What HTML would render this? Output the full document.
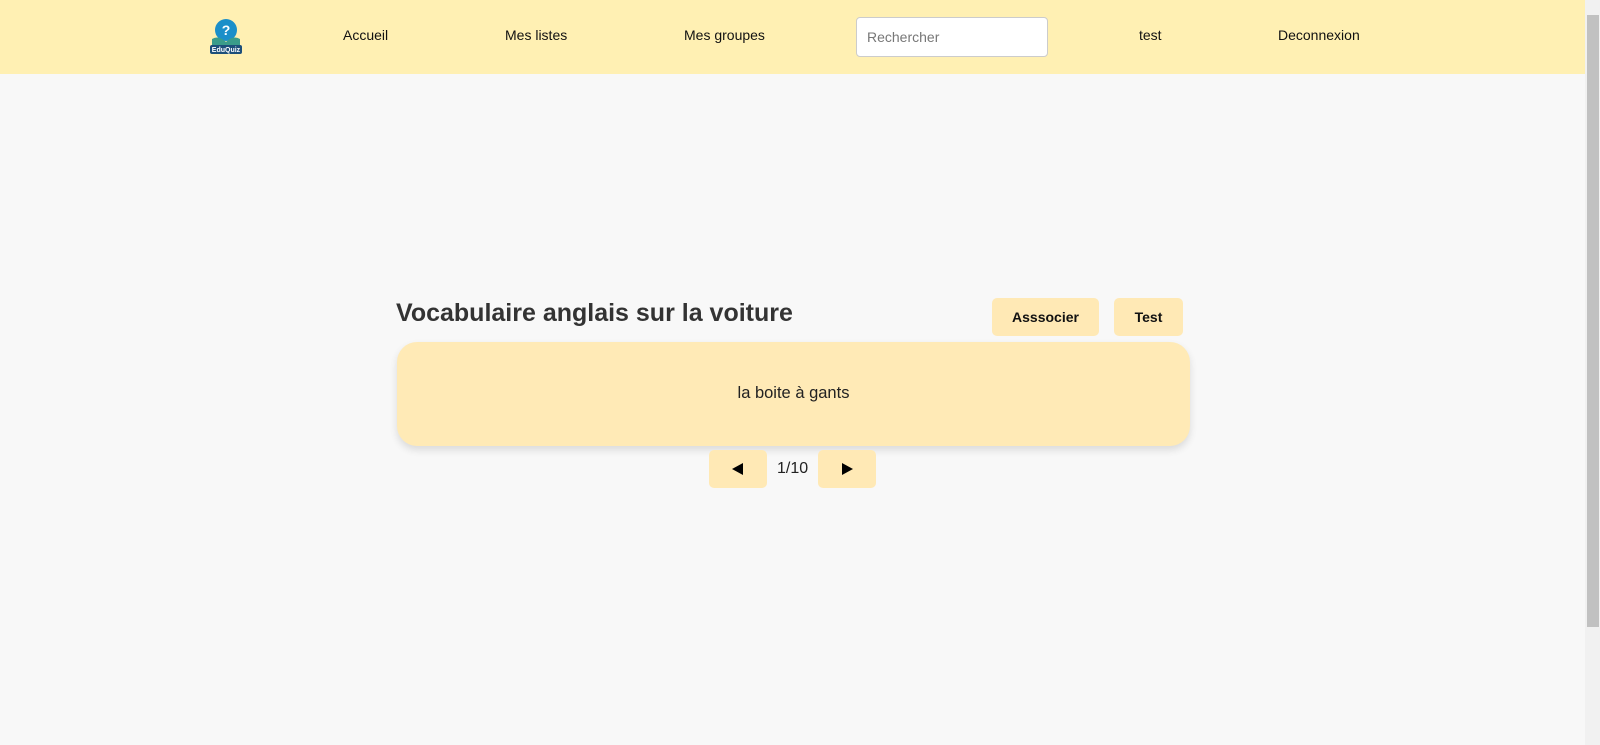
<!DOCTYPE html>
<html><head><meta charset="utf-8"><style>
*{box-sizing:border-box;margin:0;padding:0}
body{width:1600px;height:745px;overflow:hidden;background:#f8f8f8;font-family:"Liberation Sans",Arial,sans-serif;position:relative}
.hdr{position:absolute;left:0;top:0;width:1585px;height:74px;background:#fff0b3}
.nav{position:absolute;top:27px;font-size:14px;color:#111}
.search{position:absolute;left:856px;top:17px;width:192px;height:40px;border:1px solid #ccc;border-radius:4px;background:#fff;font-size:14px;color:#777;padding:11px 10px}
.sb{position:absolute;left:1585px;top:0;width:15px;height:745px;background:#f1f1f1}
.thumb{position:absolute;left:1587px;top:15px;width:12px;height:612px;background:#c1c1c1}
h1{position:absolute;left:396px;top:299px;font-size:25px;font-weight:bold;color:#333}
.btn{position:absolute;background:#ffe9b5;border-radius:5px;font-size:14px;font-weight:bold;color:#111;text-align:center}
.card{position:absolute;left:397px;top:342px;width:793px;height:104px;background:#ffeab6;border-radius:20px;box-shadow:0 4px 8px rgba(0,0,0,.12);text-align:center;font-size:16.5px;color:#222;padding-top:42px}
.btn svg{position:absolute;left:23px;top:13px}
</style></head><body>
<div class="hdr">
<svg style="position:absolute;left:208px;top:17px" width="36" height="38" viewBox="0 0 36 38">
<circle cx="18" cy="13" r="11" fill="#1b8fc9"/><text x="18" y="18" font-size="14" font-weight="bold" fill="#fff" text-anchor="middle" font-family="Liberation Sans">?</text>
<path d="M4 22 Q11 18 18 25 Q25 18 32 22 L32 30 L4 30Z" fill="#3a9c8a"/>
<rect x="2" y="28" width="32" height="9" rx="2" fill="#1d4f7a"/><text x="18" y="35" font-size="7" font-weight="bold" fill="#fff" text-anchor="middle" font-family="Liberation Sans">EduQuiz</text></svg>
<div class="nav" style="left:343px">Accueil</div>
<div class="nav" style="left:505px">Mes listes</div>
<div class="nav" style="left:684px">Mes groupes</div>
<div class="search">Rechercher</div>
<div class="nav" style="left:1139px">test</div>
<div class="nav" style="left:1278px">Deconnexion</div>
</div>
<div class="sb"></div><div class="thumb"></div>
<h1>Vocabulaire anglais sur la voiture</h1>
<div class="btn" style="left:992px;top:298px;width:107px;height:38px;line-height:38px">Asssocier</div>
<div class="btn" style="left:1114px;top:298px;width:69px;height:38px;line-height:38px">Test</div>
<div class="card">la boite à gants</div>
<div class="btn" style="left:709px;top:450px;width:58px;height:38px"><svg width="12" height="12" viewBox="0 0 12 12"><path d="M11 0V12L0 6Z" fill="#000"/></svg></div>
<div style="position:absolute;left:777px;top:460px;font-size:16px;color:#222">1/10</div>
<div class="btn" style="left:818px;top:450px;width:58px;height:38px"><svg width="12" height="12" viewBox="0 0 12 12"><path d="M1 0V12L12 6Z" fill="#000"/></svg></div>
</body></html>
